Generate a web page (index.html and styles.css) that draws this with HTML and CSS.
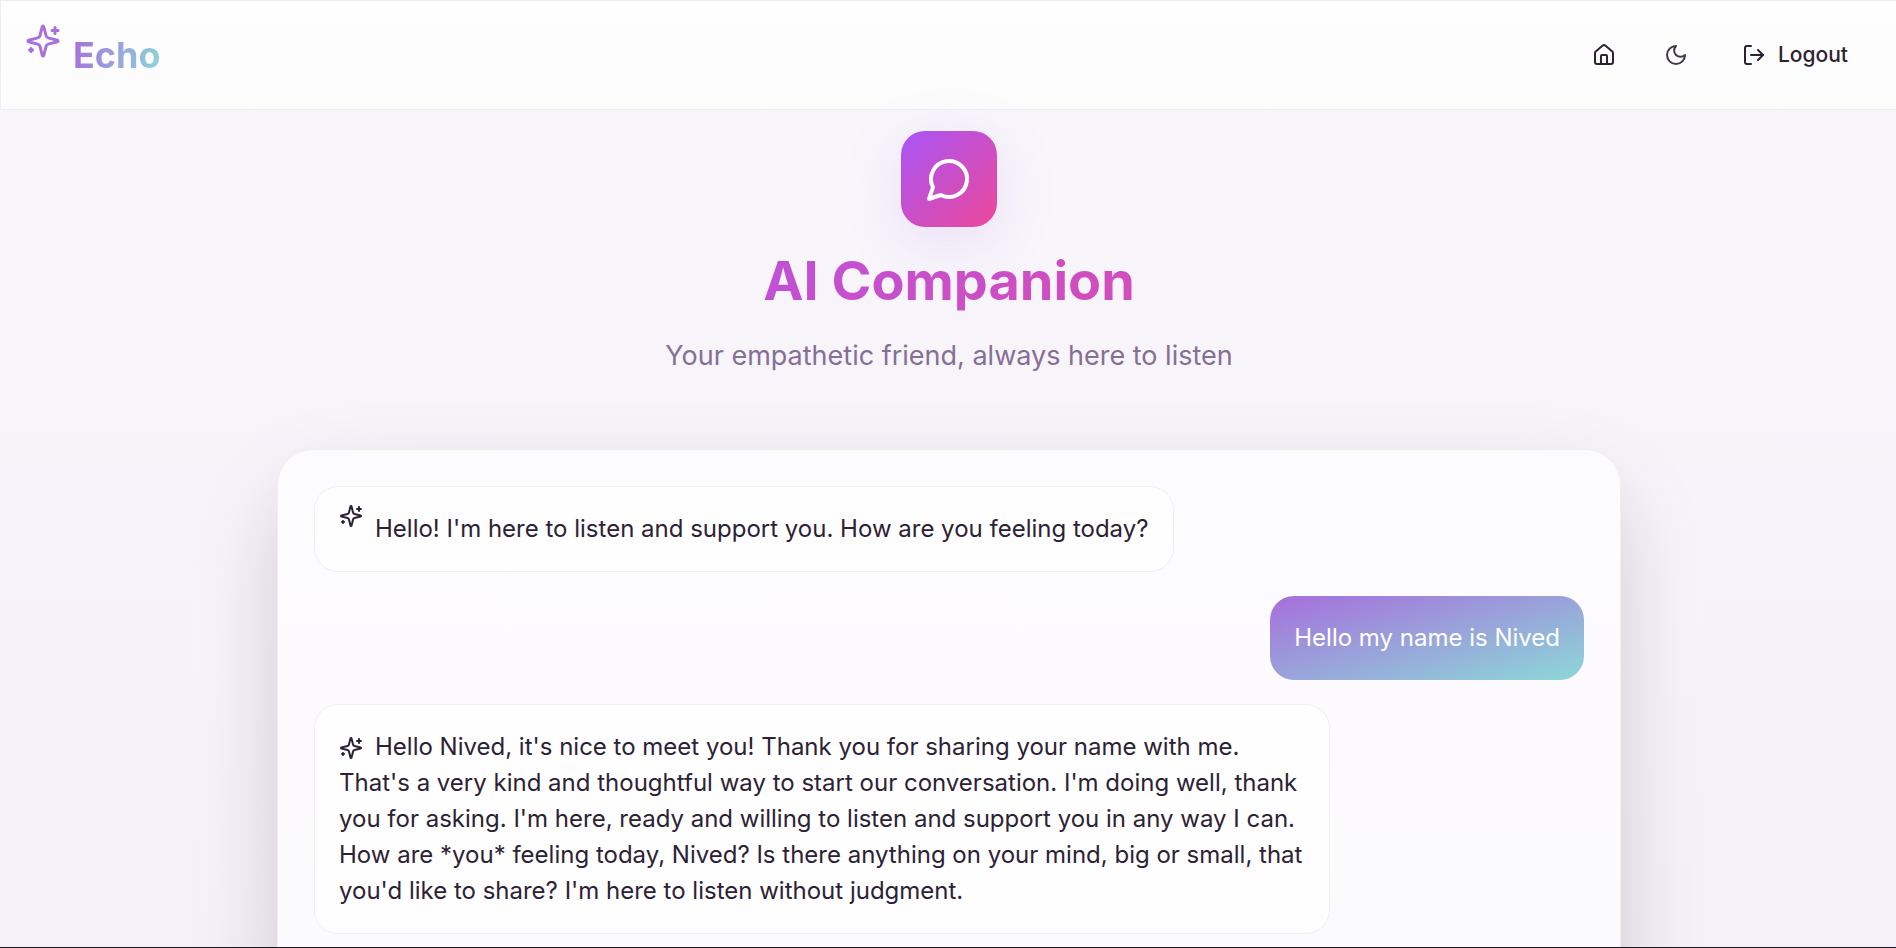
FILE: index.html
```html
<!DOCTYPE html>
<html lang="en">
<head>
<meta charset="utf-8">
<meta name="viewport" content="width=device-width, initial-scale=1">
<title>Echo</title>
<link rel="stylesheet" href="styles.css">
</head>
<body>
<svg class="symbols" aria-hidden="true">
  <symbol id="sparkles" viewBox="0 0 24 24">
    <path d="M9.937 15.5A2 2 0 0 0 8.5 14.063l-6.135-1.582a.5.5 0 0 1 0-.962L8.5 9.936A2 2 0 0 0 9.937 8.5l1.582-6.135a.5.5 0 0 1 .963 0L14.063 8.5A2 2 0 0 0 15.5 9.937l6.135 1.581a.5.5 0 0 1 0 .964L15.5 14.063a2 2 0 0 0-1.437 1.437l-1.582 6.135a.5.5 0 0 1-.963 0z"/>
    <path d="M20 3v4"/><path d="M22 5h-4"/><path d="M4 17v2"/><path d="M5 18H3"/>
  </symbol>
</svg>
<header class="topbar">
  <a class="brand" href="#">
    <svg class="icon icon-brand floating" aria-hidden="true"><use href="#sparkles"/></svg>
    <span class="brand-name">Echo</span>
  </a>
  <nav class="nav">
    <a class="nav-item" href="#" aria-label="Home">
      <svg class="icon" viewBox="0 0 24 24" aria-hidden="true"><path d="M15 21v-8a1 1 0 0 0-1-1h-4a1 1 0 0 0-1 1v8"/><path d="M3 10a2 2 0 0 1 .709-1.528l7-5.999a2 2 0 0 1 2.582 0l7 5.999A2 2 0 0 1 21 10v9a2 2 0 0 1-2 2H5a2 2 0 0 1-2-2z"/></svg>
    </a>
    <button class="nav-item" type="button" aria-label="Dark mode">
      <svg class="icon icon-muted" viewBox="0 0 24 24" aria-hidden="true"><path d="M12 3a6 6 0 0 0 9 9 9 9 0 1 1-9-9Z"/></svg>
    </button>
    <button class="nav-item nav-wide" type="button">
      <svg class="icon" viewBox="0 0 24 24" aria-hidden="true"><path d="M9 21H5a2 2 0 0 1-2-2V5a2 2 0 0 1 2-2h4"/><path d="m16 17 5-5-5-5"/><path d="M21 12H9"/></svg>
      <span>Logout</span>
    </button>
  </nav>
</header>
<main class="page">
  <section class="hero">
    <div class="hero-badge">
      <svg class="icon icon-hero" viewBox="0 0 24 24" aria-hidden="true"><path d="M7.9 20A9 9 0 1 0 4 16.1L2 22Z"/></svg>
    </div>
    <h1 class="hero-title">AI Companion</h1>
    <p class="hero-text">Your empathetic friend, always here to listen</p>
  </section>
  <section class="chat">
    <p class="bubble bubble-bot"><svg class="icon icon-inline floating" aria-hidden="true"><use href="#sparkles"/></svg>Hello! I'm here to listen and support you. How are you feeling today?</p>
    <p class="bubble bubble-user">Hello my name is Nived</p>
    <p class="bubble bubble-bot"><svg class="icon icon-inline" aria-hidden="true"><use href="#sparkles"/></svg>Hello Nived, it's nice to meet you! Thank you for sharing your name with me. That's a very kind and thoughtful way to start our conversation. I'm doing well, thank you for asking. I'm here, ready and willing to listen and support you in any way I can. How are *you* feeling today, Nived? Is there anything on your mind, big or small, that you'd like to share? I'm here to listen without judgment.</p>
  </section>
</main>
</body>
</html>
```
FILE: styles.css
```css
* {
  box-sizing: border-box;
}

body {
  display: flex;
  flex-direction: column;
  height: 100vh;
  margin: 0;
  overflow: hidden;
  border-bottom: 1px solid #1b1620;
  background: linear-gradient(180deg, #f9f7fc, #f4f1f8);
  color: #2d2235;
  font-family: Inter, "Liberation Sans", sans-serif;
  font-size: 24px;
  line-height: 36px;
}

.symbols {
  position: absolute;
  width: 0;
  height: 0;
}

.icon {
  width: 24px;
  height: 24px;
  flex: none;
  fill: none;
  stroke: currentColor;
  stroke-width: 2;
  stroke-linecap: round;
  stroke-linejoin: round;
}

.floating {
  transform: translateY(-14px);
}

.topbar {
  display: flex;
  flex: none;
  align-items: center;
  justify-content: space-between;
  padding: 24px;
  border: 1px solid #f1ecf3;
  border-right: 0;
  background: linear-gradient(180deg, #fefefe, #fcfcfc);
}

.brand {
  display: flex;
  align-items: center;
  gap: 12px;
  text-decoration: none;
}

.icon-brand {
  width: 36px;
  height: 36px;
  color: #a671db;
}

.brand-name {
  background: linear-gradient(100deg, #a66fdc, #8cd8d8);
  background-clip: text;
  color: transparent;
  font-size: 36px;
  font-weight: 700;
  line-height: 48px;
}

.nav {
  display: flex;
  align-items: center;
  gap: 12px;
}

.nav-item {
  display: flex;
  align-items: center;
  justify-content: center;
  gap: 12px;
  min-width: 60px;
  height: 60px;
  padding: 0;
  border: 0;
  background: none;
  color: #2d2235;
  font: 500 21px/30px Inter, "Liberation Sans", sans-serif;
}

.nav-wide {
  padding: 0 24px;
}

.icon-muted {
  opacity: 0.9;
}

.page {
  display: flex;
  flex: none;
  flex-direction: column;
  align-items: center;
  gap: 72px;
  padding: 21px 24px 72px 26px;
}

.hero {
  display: flex;
  flex-direction: column;
  align-items: center;
  gap: 24px;
  width: 100%;
  max-width: 1344px;
  text-align: center;
}

.hero-badge {
  display: flex;
  align-items: center;
  justify-content: center;
  width: 96px;
  height: 96px;
  border-radius: 24px;
  background: linear-gradient(135deg, #a855f7, #ec4899);
  box-shadow: 0 12px 60px rgba(148, 85, 220, 0.15);
  color: #fff;
}

.icon-hero {
  width: 48px;
  height: 48px;
}

.hero-title {
  width: 100%;
  margin: 0;
  background: linear-gradient(135deg, #a855f7, #ec4899);
  background-clip: text;
  color: transparent;
  font-size: 54px;
  font-weight: 700;
  line-height: 60px;
}

.hero-text {
  margin: 0;
  color: #866f96;
  font-size: 27px;
  line-height: 42px;
}

.chat {
  display: flex;
  flex-direction: column;
  align-items: flex-start;
  gap: 24px;
  width: 100%;
  max-width: 1344px;
  min-height: 900px;
  padding: 36px;
  border: 1px solid #f3edf3;
  border-radius: 36px;
  background: linear-gradient(180deg, #fcfcfe, #fdfafd 300px, #fbfbfd 450px);
  box-shadow: 0 36px 96px -12px rgba(0, 0, 0, 0.2);
}

.bubble {
  max-width: 80%;
  margin: 0;
  padding: 24px;
  border-radius: 24px;
}

.bubble-bot {
  border: 1px solid #f1eff4;
  background: #fefefe;
}

.bubble-user {
  align-self: flex-end;
  background: linear-gradient(165deg, #a66fdc, #8cd8d8);
  color: #fff;
}

.icon-inline {
  display: inline-block;
  margin-right: 12px;
  vertical-align: -5px;
}
```
